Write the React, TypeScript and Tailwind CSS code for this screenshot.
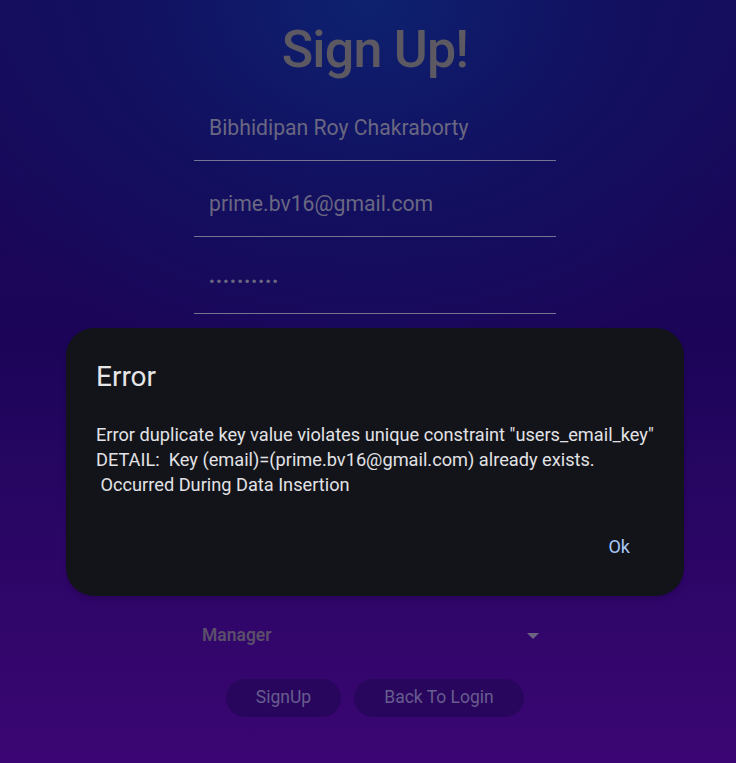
import { useState } from "react"

const fields = [
  { id: "name", value: "Bibhidipan Roy Chakraborty" },
  { id: "email", value: "prime.bv16@gmail.com" },
  { id: "password", value: "••••••••••" },
]

export default function App() {
  const [open, setOpen] = useState(true)

  return (
    <div className="relative min-h-[763px] w-full overflow-hidden font-['Roboto',sans-serif] bg-[radial-gradient(ellipse_65%_50%_at_50%_0%,#0d2270_0%,#121060_50%,transparent_100%),linear-gradient(to_bottom,#170a5a,#1c0559_45%,#3b0673)]">
      <div className="flex flex-col items-center pt-[20px] pl-[14px]">
        <h1 className="h-[60px] text-[52px] leading-[60px] font-medium text-[#5c5962] tracking-[-0.8px]">Sign Up!</h1>

        <div className="mt-[4px] w-[362px] flex flex-col">
          {fields.map((f) => (
            <div key={f.id} className="h-[76.5px] flex items-end pb-[20px] pl-[15px] border-b border-[#767491]">
              <span
                className={`leading-6 text-[#6a6781] ${
                  f.id === "password" ? "text-[17px] tracking-[1.3px]" : "text-[21.2px]"
                }`}
              >
                {f.value}
              </span>
            </div>
          ))}
        </div>

        {/* fields hidden behind the dialog */}
        <div className="h-[306px]" />

        <div className="w-[362px] flex items-center justify-between pl-[8px] pr-[17px] h-[32px]">
          <span className="text-[17.5px] font-semibold text-[#5b4e6b]">Manager</span>
          <svg width="12" height="6" viewBox="0 0 12 6" aria-hidden="true">
            <path d="M0 0h12L6 6z" fill="#6d6383" />
          </svg>
        </div>

        <div className="mt-[27px] flex gap-[13px]">
          <button className="w-[115px] h-[38px] rounded-full bg-[#29065e] text-[17.5px] text-[#675d8e]">SignUp</button>
          <button className="w-[170px] h-[38px] rounded-full bg-[#29065e] text-[17.5px] text-[#675d8e]">Back To Login</button>
        </div>
      </div>

      {open && (
        <div
          role="dialog"
          aria-modal="true"
          className="absolute left-[66px] top-[328px] w-[618px] h-[268px] rounded-[28px] bg-[#121419] shadow-md px-[30px] pt-[31px] pb-[30px] flex flex-col"
        >
          <h2 className="text-[28px] leading-[36px] text-[#e6e6e8]">Error</h2>
          <p className="mt-[27px] text-[18.2px] leading-[25px] text-[#e2e2e6] whitespace-pre-wrap">
            {'Error duplicate key value violates unique constraint "users_email_key"\nDETAIL:  Key (email)=(prime.bv16@gmail.com) already exists.\n Occurred During Data Insertion'}
          </p>
          <div className="mt-auto flex justify-end">
            <button
              onClick={() => setOpen(false)}
              className="h-[40px] px-[24px] text-[18px] text-[#a8c7fa] rounded-full"
            >
              Ok
            </button>
          </div>
        </div>
      )}
    </div>
  )
}
